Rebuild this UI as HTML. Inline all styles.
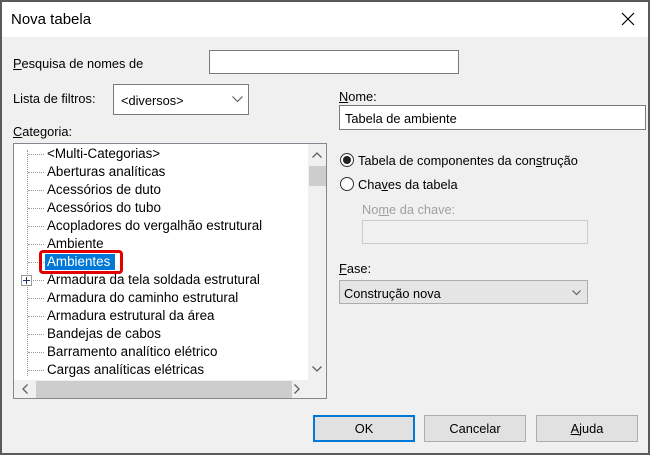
<!DOCTYPE html>
<html><head><style>
*{box-sizing:border-box;margin:0;padding:0}
body{width:650px;height:455px;background:#5a5a5a;position:relative;overflow:hidden;font-family:"Liberation Sans",sans-serif;font-size:12.8px;color:#000}
.win{position:absolute;left:2px;top:2px;width:646px;height:451px;background:#f0f0f0}
.title{position:absolute;left:0;top:0;width:646px;height:35px;background:#fff}
.a{position:absolute;white-space:nowrap}
.box{position:absolute;background:#fff;border:1px solid #7a7a7a}
u{text-decoration:underline}
.item{position:absolute;left:33px;height:16px;line-height:16px;white-space:nowrap;font-size:13.4px}
.dot{position:absolute;left:14px;width:16px;border-top:1px dotted #999}
.btn{position:absolute;top:413px;height:27px;width:102px;border:1px solid #adadad;background:#e1e1e1;text-align:center;line-height:25px}
</style></head><body>
<div class="win">
<div class="title"><div class="a" style="left:9px;top:9px;font-size:15px">Nova tabela</div>
<svg class="a" style="left:619px;top:10px" width="14" height="14"><path d="M1 1L13 13M13 1L1 13" stroke="#000" stroke-width="1.2"/></svg></div>

<div class="a" style="left:11px;top:54px"><u>P</u>esquisa de nomes de</div>
<div class="box" style="left:207px;top:48px;width:250px;height:24px"></div>

<div class="a" style="left:11px;top:89px">Lista de filtros:</div>
<div class="box" style="left:111px;top:82px;width:136px;height:31px"><div class="a" style="left:7px;top:8px">&lt;diversos&gt;</div>
<svg class="a" style="left:118px;top:11px" width="11" height="7"><path d="M0.5 0.5L5.5 5.5L10.5 0.5" stroke="#555" fill="none"/></svg></div>

<div class="a" style="left:11px;top:122px"><u>C</u>ategoria:</div>
<div class="box" style="left:11px;top:141px;width:314px;height:256px;border-color:#828790">
<div style="position:absolute;left:13px;top:6px;height:226px;border-left:1px dotted #999"></div>
<div class="dot" style="top:10px"></div><div class="item" style="top:2px">&lt;Multi-Categorias&gt;</div>
<div class="dot" style="top:28px"></div><div class="item" style="top:20px">Aberturas analíticas</div>
<div class="dot" style="top:46px"></div><div class="item" style="top:38px">Acessórios de duto</div>
<div class="dot" style="top:64px"></div><div class="item" style="top:56px">Acessórios do tubo</div>
<div class="dot" style="top:82px"></div><div class="item" style="top:74px">Acopladores do vergalhão estrutural</div>
<div class="dot" style="top:100px"></div><div class="item" style="top:92px">Ambiente</div>
<div class="dot" style="top:118px"></div>
<div style="position:absolute;left:25px;top:106px;width:84px;height:24px;border:3px solid #e00000;border-radius:4px"></div>
<div class="item" style="top:110px;left:31px;width:70px;background:#0078d7;color:#fff;padding-left:2px">Ambientes</div>
<div class="dot" style="top:136px"></div>
<div style="position:absolute;left:7px;top:131px;width:11px;height:11px;border:1px solid #999;background:#fff"><div style="position:absolute;left:1px;top:4px;width:7px;border-top:1px solid #236;"></div><div style="position:absolute;left:4px;top:1px;height:7px;border-left:1px solid #236"></div></div>
<div class="item" style="top:128px">Armadura da tela soldada estrutural</div>
<div class="dot" style="top:154px"></div><div class="item" style="top:146px">Armadura do caminho estrutural</div>
<div class="dot" style="top:172px"></div><div class="item" style="top:164px">Armadura estrutural da área</div>
<div class="dot" style="top:190px"></div><div class="item" style="top:182px">Bandejas de cabos</div>
<div class="dot" style="top:208px"></div><div class="item" style="top:200px">Barramento analítico elétrico</div>
<div class="dot" style="top:226px"></div><div class="item" style="top:218px">Cargas analíticas elétricas</div>
<div style="position:absolute;left:294px;top:0;width:18px;height:236px;background:#f0f0f0">
<svg class="a" style="left:4px;top:8px" width="10" height="6"><path d="M0.5 5.5L5 1L9.5 5.5" stroke="#606060" fill="none" stroke-width="1.3"/></svg>
<div class="a" style="left:1px;top:22px;width:17px;height:20px;background:#cdcdcd"></div>
<svg class="a" style="left:4px;top:222px" width="10" height="6"><path d="M0.5 0.5L5 5L9.5 0.5" stroke="#606060" fill="none" stroke-width="1.3"/></svg></div>
<div style="position:absolute;left:0;top:236px;width:312px;height:18px;background:#f0f0f0">
<svg class="a" style="left:8px;top:4px" width="6" height="10"><path d="M5.5 0.5L1 5L5.5 9.5" stroke="#606060" fill="none" stroke-width="1.3"/></svg>
<div class="a" style="left:22px;top:1px;width:256px;height:17px;background:#cdcdcd"></div>
<svg class="a" style="left:280px;top:4px" width="6" height="10"><path d="M0.5 0.5L5 5L0.5 9.5" stroke="#606060" fill="none" stroke-width="1.3"/></svg></div>
</div>

<div class="a" style="left:337px;top:87px"><u>N</u>ome:</div>
<div class="box" style="left:337px;top:103px;width:307px;height:25px"><div class="a" style="left:5px;top:5px">Tabela de ambiente</div></div>

<div class="a" style="left:338px;top:151px;width:14px;height:14px;border:1px solid #333;border-radius:50%;background:#fff"><div class="a" style="left:2px;top:2px;width:8px;height:8px;border-radius:50%;background:#222"></div></div>
<div class="a" style="left:356px;top:151px">Tabela de componentes da con<u>s</u>trução</div>
<div class="a" style="left:338px;top:175px;width:14px;height:14px;border:1px solid #333;border-radius:50%;background:#fff"></div>
<div class="a" style="left:356px;top:175px">Cha<u>v</u>es da tabela</div>
<div class="a" style="left:360px;top:200px;color:#a0a0a0">No<u>m</u>e da chave:</div>
<div class="a" style="left:360px;top:218px;width:226px;height:24px;border:1px solid #ccc;background:#f0f0f0"></div>

<div class="a" style="left:337px;top:259px"><u>F</u>ase:</div>
<div class="a" style="left:337px;top:278px;width:249px;height:24px;border:1px solid #adadad;background:#e5e5e5"><div class="a" style="left:4px;top:5px">Construção nova</div>
<svg class="a" style="left:232px;top:9px" width="9" height="6"><path d="M0.5 0.5L4.5 4.5L8.5 0.5" stroke="#555" fill="none"/></svg></div>

<div class="btn" style="left:311px;border:2px solid #0078d7;line-height:23px">OK</div>
<div class="btn" style="left:422px">Cancelar</div>
<div class="btn" style="left:534px"><u>A</u>juda</div>
</div>
</body></html>
